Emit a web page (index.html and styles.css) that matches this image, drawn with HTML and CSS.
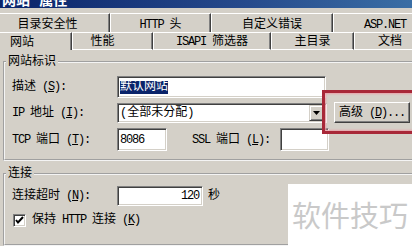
FILE: index.html
```html
<!DOCTYPE html>
<html lang="zh-CN">

<head>
    <meta charset="UTF-8" />
    <title>网站 属性</title>
    <link rel="stylesheet" href="styles.css">
</head>

<body>
    <div class="titlebar"><span class="title">网站 属性</span></div>

    <div class="tabs">
        <div class="tab-row back">
            <div class="tab t1"><span>目录安全性</span></div>
            <div class="tab t2"><span><span class="en">HTTP </span>头</span></div>
            <div class="tab t3"><span>自定义错误</span></div>
            <div class="tab t4"><span class="en">ASP.NET</span></div>
        </div>
        <div class="tab-row front">
            <div class="tab active f1"><span>网站</span></div>
            <div class="tab f2"><span>性能</span></div>
            <div class="tab f3"><span><span class="en">ISAPI </span>筛选器</span></div>
            <div class="tab f4"><span>主目录</span></div>
            <div class="tab f5"><span>文档</span></div>
        </div>
    </div>

    <div class="page">
        <fieldset class="group ident">
            <legend>网站标识</legend>
            <div class="row r-desc">
                <span class="label">描述<span class="en"> (<u>S</u>):</span></span>
                <div class="field desc"><span class="selected">默认网站</span></div>
            </div>
            <div class="row r-ip">
                <span class="label"><span class="en">IP </span>地址<span class="en"> (<u>I</u>):</span></span>
                <div class="field ip">
                    <span class="value">(全部未分配)</span>
                    <span class="drop">
                        <svg width="7" height="4" viewBox="0 0 7 4"><path d="M0 0h7L3.5 4z" fill="#000"/></svg>
                    </span>
                </div>
                <div class="button"><span>高级<span class="en"> (<u>D</u>)...</span></span></div>
            </div>
            <div class="row r-port">
                <span class="label"><span class="en">TCP </span>端口<span class="en"> (<u>T</u>):</span></span>
                <div class="field port"><span class="en">8086</span></div>
                <span class="label ssl"><span class="en">SSL </span>端口<span class="en"> (<u>L</u>):</span></span>
                <div class="field port ssl-port"></div>
            </div>
        </fieldset>

        <fieldset class="group conn">
            <legend>连接</legend>
            <div class="row r-timeout">
                <span class="label">连接超时<span class="en"> (<u>N</u>):</span></span>
                <div class="field timeout"><span class="en">120</span></div>
                <span class="unit">秒</span>
            </div>
            <div class="row r-keep">
                <span class="check">
                    <svg width="9" height="9" viewBox="0 0 9 9"><path d="M1 4l2 2.5L8 1" fill="none" stroke="#000" stroke-width="2"/></svg>
                </span>
                <span>保持<span class="en"> HTTP </span>连接<span class="en"> (<u>K</u>)</span></span>
            </div>
        </fieldset>

        <div class="row r-log">
            <span class="check"></span>
            <span>启用日志记录<span class="en"> (<u>E</u>)</span></span>
        </div>
    </div>

    <div class="highlight"></div>
    <div class="watermark">软件技巧</div>
</body>

</html>
```

FILE: styles.css
```css
html,
body {
    margin: 0;
    padding: 0;
}

body {
    position: relative;
    width: 412px;
    height: 246px;
    overflow: hidden;
    background: #d4d0c8;
    font-family: "Liberation Mono", "Noto Sans CJK SC", monospace;
    font-size: 12px;
    line-height: 14px;
    color: #000;
}

/* latin runs are half width, like the old bitmap font */
.en {
    letter-spacing: -1.2px;
}

u {
    text-decoration: underline;
    text-underline-offset: 1px;
}

/* title bar, only its lower edge is in the shot */
.titlebar {
    height: 8px;
    overflow: hidden;
    background: linear-gradient(90deg, #0a246a, #264a8c 60%, #3a6ea5);
}

.title {
    display: block;
    margin-top: -9px;
    padding-left: 2px;
    font-family: "Noto Sans CJK SC", sans-serif;
    font-size: 14px;
    font-weight: bold;
    line-height: 16px;
    color: #fff;
    word-spacing: 6px;
}

/* tabs */
.tabs {
    margin-top: 5px;
}

.tab-row {
    display: flex;
    white-space: nowrap;
}

.tab-row.back {
    height: 19px;
}

.tab-row.front {
    height: 18px;
}

.tab {
    flex: none;
    display: flex;
    align-items: center;
    justify-content: center;
    box-sizing: border-box;
    border-top: 1px solid #fff;
    border-left: 1px solid #fff;
    border-right: 1px solid #404040;
    box-shadow: inset -1px 0 #808080;
}

.back .tab {
    padding-top: 4px;
}

.front .tab {
    padding-top: 2px;
    border-bottom: 1px solid #fff;
}

.front .tab.active {
    border-bottom: none;
    border-left: none;
}

.t1 { width: 110px; padding-right: 14px; border-left: none; }
.t2 { width: 101px; }
.t3 { width: 122px; }
.t4 { width: 104px; }

.f1 { width: 72px; padding-right: 27px; }
.f2 { width: 81px; padding-right: 20px; }
.f3 { width: 118px; }
.f4 { width: 83px; }
.f5 { width: 72px; }

/* page */
.page {
    padding-top: 5px;
}

.group {
    margin: 0 -30px 0 3px;
    padding: 0 7px;
    border: 2px groove #f4f4f4;
    min-width: 0;
}

.group legend {
    margin-left: -6px;
    padding: 0 2px;
    line-height: 14px;
}

.ident {
    padding-top: 7px;
    padding-bottom: 8px;
}

.conn {
    margin-top: 6px;
    padding-top: 5px;
    padding-bottom: 17px;
}

.row {
    display: flex;
    align-items: center;
    white-space: nowrap;
}

.label {
    flex: none;
    width: 105px;
}

.field {
    flex: none;
    box-sizing: border-box;
    background: #fff;
    border: 1px solid;
    border-color: #808080 #fff #fff #808080;
    box-shadow: inset 1px 1px #404040, inset -1px -1px #d4d0c8;
    display: flex;
    align-items: center;
    padding: 0 2px;
}

.desc {
    width: 209px;
    height: 22px;
}

.selected {
    background: #0a246a;
    color: #fff;
    line-height: 13px;
}

.r-ip {
    margin-top: 4px;
}

.ip {
    width: 210px;
    height: 20px;
    padding-right: 2px;
}

.ip .value {
    flex: 1;
}

.drop {
    width: 15px;
    height: 16px;
    box-sizing: border-box;
    border: 1px solid;
    border-color: #d4d0c8 #404040 #404040 #d4d0c8;
    box-shadow: inset 1px 1px #fff, inset -1px -1px #808080;
    background: #d4d0c8;
    display: flex;
    align-items: center;
    justify-content: center;
}

.button {
    flex: none;
    margin-left: 7px;
    width: 76px;
    height: 21px;
    box-sizing: border-box;
    border: 1px solid;
    border-color: #fff #404040 #404040 #fff;
    box-shadow: inset -1px -1px #808080;
    display: flex;
    align-items: center;
    justify-content: center;
}

.r-port {
    margin-top: 5px;
}

.port {
    width: 50px;
    height: 23px;
}

.ssl {
    margin-left: 25px;
    width: 88px;
}

.ssl-port {
    width: 49px;
}

.timeout {
    width: 86px;
    height: 20px;
    justify-content: flex-end;
    padding-right: 3px;
}

.unit {
    margin-left: 5px;
}

.r-keep {
    margin-top: 7px;
    padding-left: 1px;
}

.check {
    flex: none;
    width: 13px;
    height: 13px;
    margin-right: 6px;
    box-sizing: border-box;
    background: #fff;
    border: 1px solid;
    border-color: #808080 #fff #fff #808080;
    box-shadow: inset 1px 1px #404040, inset -1px -1px #d4d0c8;
    display: flex;
    align-items: center;
    justify-content: center;
}

.r-log {
    margin-top: 4px;
    padding-left: 13px;
}

/* marks laid over the shot */
.highlight {
    position: absolute;
    left: 322px;
    top: 90px;
    width: 100px;
    height: 44px;
    box-sizing: border-box;
    border: 3px solid #a82838;
    box-shadow: inset 0 0 2px 1px #e9a0a8;
}

.watermark {
    position: absolute;
    left: 288px;
    top: 184px;
    width: 124px;
    height: 62px;
    box-sizing: border-box;
    padding: 16px 0 0 4px;
    background: #fff;
    font-family: "Noto Sans CJK SC", sans-serif;
    font-size: 29px;
    line-height: 29px;
    color: #c9c9c9;
}
```
